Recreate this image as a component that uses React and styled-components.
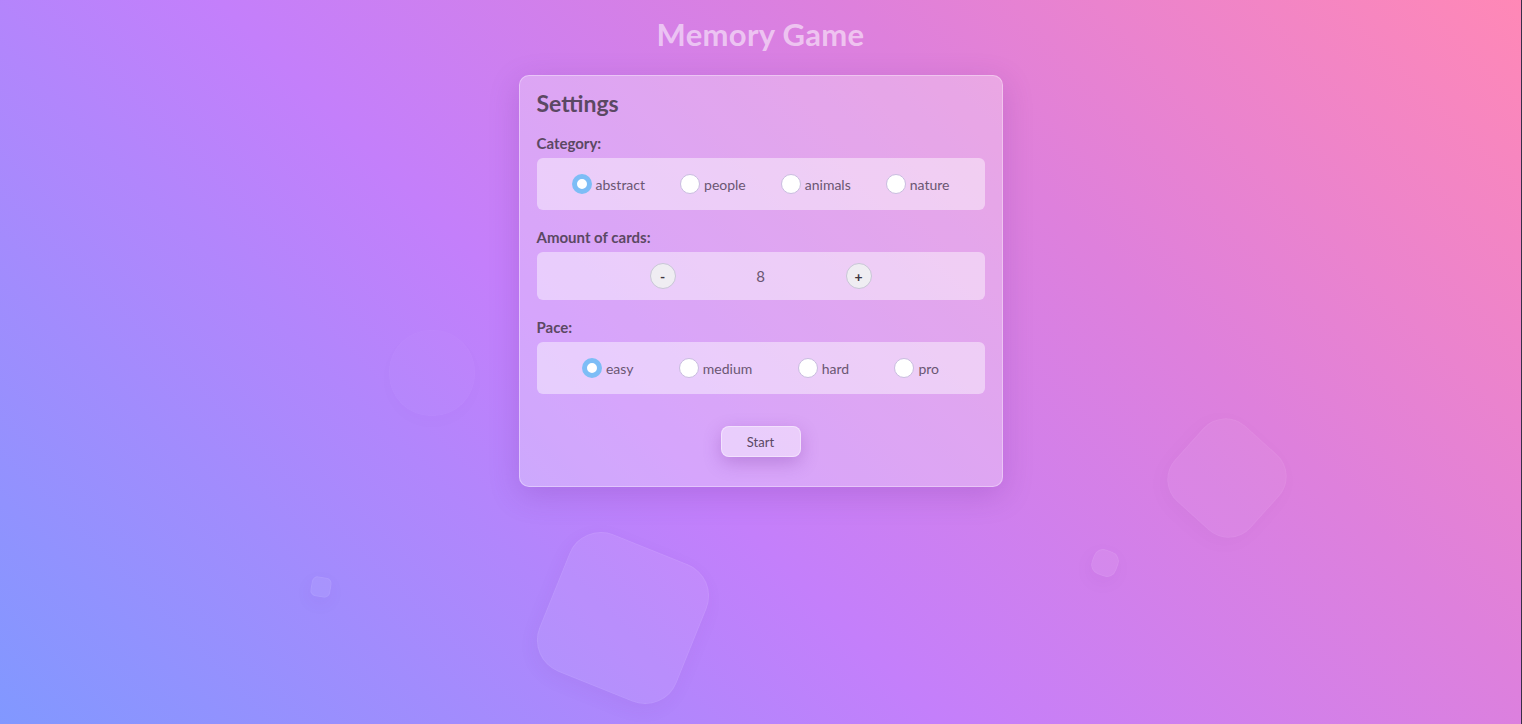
import React, { useState } from "react";
import styled, { createGlobalStyle } from "styled-components";

const Global = createGlobalStyle`
  html, body { margin: 0; padding: 0; height: 100%; }
  body {
    font-family: "Lato", "Noto Sans", sans-serif;
    overflow: hidden;
  }
  #root { height: 100%; }
`;

const Page = styled.div`
  position: relative;
  width: 100%;
  height: 724px;
  overflow: hidden;
  background: linear-gradient(45deg, #8198ff 0%, #c47ffb 42%, #de80dc 70%, #ff88b6 100%);
  display: flex;
  flex-direction: column;
  align-items: center;
  box-sizing: border-box;
  border-right: 1px solid #3b2d4a;
`;

const Shape = styled.div`
  position: absolute;
  left: ${(p) => p.$x}px;
  top: ${(p) => p.$y}px;
  width: ${(p) => p.$s}px;
  height: ${(p) => p.$s}px;
  border-radius: ${(p) => p.$r}px;
  transform: rotate(${(p) => p.$rot}deg);
  background: rgba(255, 255, 255, ${(p) => p.$a});
  border: 1px solid rgba(255, 255, 255, ${(p) => p.$a * 0.8});
  box-shadow: 0 6px 18px rgba(120, 40, 140, ${(p) => p.$a * 0.8});
  pointer-events: none;
`;

const Title = styled.h1`
  position: relative;
  margin: 15px 0 0;
  font-size: 31px;
  font-weight: 700;
  line-height: 38px;
  color: rgba(255, 255, 255, 0.55);
  letter-spacing: 0.3px;
`;

const Card = styled.div`
  position: relative;
  margin-top: 22px;
  width: 484px;
  box-sizing: border-box;
  padding: 12px 17px 29px;
  border-radius: 10px;
  background: rgba(255, 255, 255, 0.3);
  border: 1px solid rgba(255, 255, 255, 0.35);
  box-shadow: 0 8px 30px rgba(110, 40, 150, 0.22);
  display: flex;
  flex-direction: column;
`;

const Heading = styled.h2`
  margin: 0 0 15px;
  font-size: 23px;
  line-height: 30px;
  font-weight: 700;
  color: #5b4863;
`;

const Label = styled.div`
  font-size: 15px;
  font-weight: 700;
  color: #5b4863;
  line-height: 20px;
  margin-bottom: 5px;
  margin-top: ${(p) => (p.$first ? 0 : 17)}px;
`;

const Box = styled.div`
  height: ${(p) => p.$h}px;
  box-sizing: border-box;
  border-radius: 6px;
  background: rgba(255, 255, 255, 0.45);
  display: flex;
  align-items: center;
  justify-content: ${(p) => p.$justify || "space-evenly"};
  gap: ${(p) => p.$gap || 0}px;
`;

const Option = styled.label`
  display: flex;
  align-items: center;
  gap: 4px;
  font-size: 14px;
  color: #6a5672;
  cursor: pointer;
`;

const Radio = styled.input.attrs({ type: "radio" })`
  appearance: none;
  margin: 0;
  width: 20px;
  height: 20px;
  border-radius: 50%;
  background: #fff;
  border: 1px solid #c9bddf;
  box-sizing: border-box;
  &:checked {
    border: 5px solid #7dbdf6;
    background: #fff;
  }
`;

const RoundBtn = styled.button`
  width: 26px;
  height: 26px;
  border-radius: 50%;
  border: 1px solid #c8c6d6;
  background: #efedf2;
  color: #3d3540;
  font-family: "Lato", sans-serif;
  font-weight: 700;
  font-size: 14px;
  padding: 0;
  display: flex;
  align-items: center;
  justify-content: center;
  cursor: pointer;
`;

const Count = styled.span`
  font-size: 15px;
  color: #6a5672;
  width: 10px;
  text-align: center;
`;

const StartBtn = styled.button`
  align-self: center;
  margin-top: 32px;
  width: 80px;
  height: 31px;
  border-radius: 8px;
  border: 1px solid rgba(255, 255, 255, 0.4);
  background: rgba(255, 255, 255, 0.45);
  color: #5b4863;
  font-family: "Lato", sans-serif;
  font-size: 13px;
  box-shadow: 0 6px 18px rgba(110, 40, 150, 0.28);
  cursor: pointer;
`;

function RadioGroup({ name, options, value, onChange }) {
  return (
    <Box $h={52}>
      {options.map((o) => (
        <Option key={o}>
          <Radio name={name} checked={value === o} onChange={() => onChange(o)} />
          {o}
        </Option>
      ))}
    </Box>
  );
}

export default function App() {
  const [cat, setCat] = useState("abstract");
  const [pace, setPace] = useState("easy");
  const [n, setN] = useState(8);
  return (
    <>
      <Global />
      <Page>
        <Shape $x={549} $y={544} $s={146} $r={34} $rot={22} $a={0.08} />
        <Shape $x={1176} $y={427} $s={100} $r={30} $rot={42} $a={0.05} />
        <Shape $x={389} $y={330} $s={84} $r={42} $rot={0} $a={0.02} />
        <Shape $x={311} $y={577} $s={18} $r={6} $rot={10} $a={0.07} />
        <Shape $x={1092} $y={550} $s={24} $r={10} $rot={20} $a={0.07} />
        <Title>Memory Game</Title>
        <Card>
          <Heading>Settings</Heading>
          <Label $first>Category:</Label>
          <RadioGroup
            name="cat"
            options={["abstract", "people", "animals", "nature"]}
            value={cat}
            onChange={setCat}
          />
          <Label>Amount of cards:</Label>
          <Box $h={48} $justify="center" $gap={80}>
            <RoundBtn onClick={() => setN((v) => Math.max(2, v - 2))}>-</RoundBtn>
            <Count>{n}</Count>
            <RoundBtn onClick={() => setN((v) => v + 2)}>+</RoundBtn>
          </Box>
          <Label>Pace:</Label>
          <RadioGroup
            name="pace"
            options={["easy", "medium", "hard", "pro"]}
            value={pace}
            onChange={setPace}
          />
          <StartBtn>Start</StartBtn>
        </Card>
      </Page>
    </>
  );
}
